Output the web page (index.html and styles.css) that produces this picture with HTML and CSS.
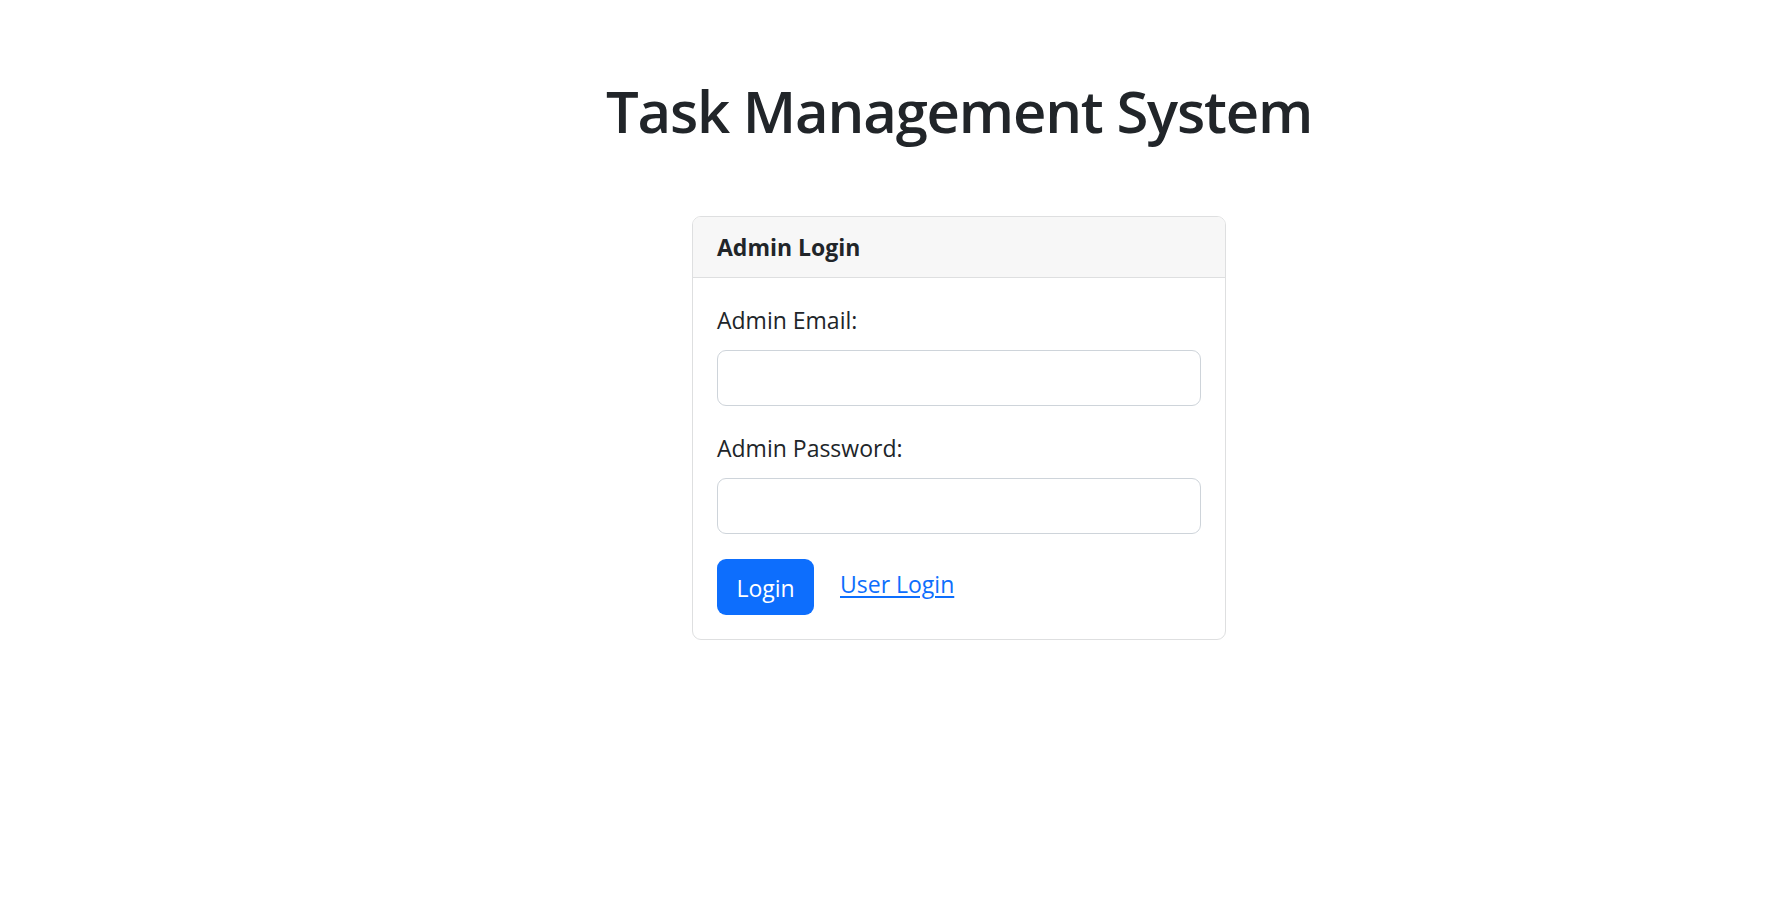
FILE: index.html
```html
<!DOCTYPE html>
<html lang="en">
<head>
<meta charset="utf-8">
<title>Task Management System</title>
<link rel="stylesheet" href="styles.css">
</head>
<body>
<main class="page">
  <h1 class="title">Task Management System</h1>
  <section class="card">
    <div class="card-header">Admin Login</div>
    <form class="card-body">
      <div class="group">
        <label class="label" for="email">Admin Email:</label>
        <input class="control" id="email" type="email">
      </div>
      <div class="group">
        <label class="label" for="password">Admin Password:</label>
        <input class="control" id="password" type="password">
      </div>
      <div class="actions">
        <button class="btn" type="button">Login</button>
        <a class="link" href="#">User Login</a>
      </div>
    </form>
  </section>
</main>
</body>
</html>
```
FILE: styles.css
```css
html, body {
  margin: 0;
  padding: 0;
  background: #ffffff;
}
body {
  font-family: "Open Sans", "Noto Sans", sans-serif;
  color: #212529;
}
.page {
  display: flex;
  flex-direction: column;
  align-items: center;
  padding: 75px 0 0 150px;
}
.title {
  margin: 0;
  font-size: 58px;
  line-height: 72px;
  font-weight: 600;
  color: #212529;
  letter-spacing: -1.2px;
}
.card {
  margin-top: 69px;
  width: 534px;
  box-sizing: border-box;
  border: 1px solid #dedfe0;
  border-radius: 9px;
  overflow: hidden;
}
.card-header {
  background: #f7f7f7;
  border-bottom: 1px solid #dedfe0;
  padding: 12px 24px;
  font-size: 23px;
  line-height: 36px;
  font-weight: 700;
  color: #212529;
}
.card-body {
  padding: 24px;
  display: flex;
  flex-direction: column;
}
.group {
  display: flex;
  flex-direction: column;
  margin-bottom: 24px;
}
.label {
  font-size: 23px;
  line-height: 36px;
  margin-bottom: 12px;
}
.control {
  height: 56px;
  box-sizing: border-box;
  border: 1px solid #ced4da;
  border-radius: 9px;
  padding: 9px 18px;
  font: inherit;
  font-size: 23px;
  background: #fff;
  outline: none;
}
.actions {
  display: flex;
  align-items: center;
  gap: 26px;
  margin-top: 1px;
}
.btn {
  height: 56px;
  width: 97px;
  border: none;
  border-radius: 9px;
  background: #0d6efd;
  color: #ffffff;
  font-family: inherit;
  font-size: 23px;
  padding: 2px 0 0 0;
  cursor: pointer;
}
.link {
  color: #0d6efd;
  font-size: 23px;
  text-decoration: underline;
  text-underline-offset: 3px;
  margin-bottom: 6px;
}
```
